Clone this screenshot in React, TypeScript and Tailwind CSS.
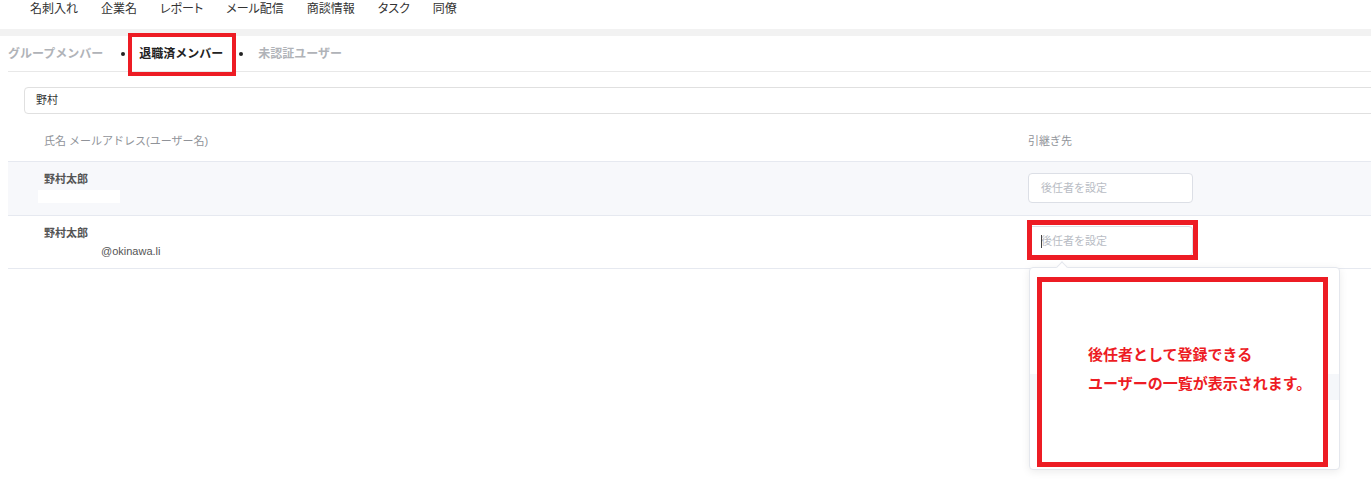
import React from 'react';

const navItems = ['名刺入れ', '企業名', 'レポート', 'メール配信', '商談情報', 'タスク', '同僚'];

// 候補行（注釈の枠に隠れている）
const popupRows = Array.from({ length: 8 }, (_, i) => i);

function SuccessorInput({ focused }: { focused?: boolean }) {
  return (
    <div className="relative w-[165px] h-[30px] rounded-[4px] border border-[#dcdfe6] bg-white flex items-center pl-[12px] text-[11px] text-[#b8bcc4]">
      {focused && <span className="absolute left-[12px] top-[8px] w-px h-[13px] bg-[#444]" />}
      <span>後任者を設定</span>
      {focused && (
        <>
          {/* 注釈の赤枠 */}
          <div className="absolute -left-[2px] -right-[6px] -top-[7px] -bottom-[5px] border-[5px] border-[#ed1c24] pointer-events-none" />
          {/* 候補一覧 */}
          <div className="absolute left-0 top-[40px] w-[311px] h-[203px] rounded-[4px] border border-[#e4e7ed] bg-white shadow-[0_2px_8px_rgba(0,0,0,0.08)] z-10">
            <div className="absolute left-[28px] -top-[5px] w-[8px] h-[8px] rotate-45 bg-white border-l border-t border-[#e4e7ed]" />
            <div className="h-full overflow-hidden pt-[2px] flex flex-col">
              {popupRows.map((row) => (
                <div key={row} className={`h-[26px] shrink-0 ${row === 4 ? 'bg-[#f5f7fa]' : ''}`} />
              ))}
            </div>
            <div className="absolute left-[7px] top-[9px] w-[291px] h-[190px] border-[5px] border-[#ed1c24] bg-white flex flex-col justify-center pl-[46px] pb-[6px] text-[15px] leading-[29px] font-bold text-[#ed1c24]">
              <p>後任者として登録できる</p>
              <p>ユーザーの一覧が表示されます。</p>
            </div>
          </div>
        </>
      )}
    </div>
  );
}

export default function App() {
  return (
    <div className="w-[1371px] h-[493px] overflow-hidden bg-white font-['Liberation_Sans','Noto_Sans_CJK_JP',sans-serif]">
      {/* ヘッダーナビ */}
      <nav className="h-[29px] flex items-start pt-[1px] pl-[30px] gap-[23px] text-[12px] leading-[16px] text-[#333] [font-feature-settings:'palt']">
        {navItems.map((item) => (
          <span key={item}>{item}</span>
        ))}
      </nav>
      <div className="h-[7px] bg-[#f2f2f2]" />

      {/* タブ */}
      <div className="ml-[8px] h-[36px] border-b border-[#e8e8e8] flex items-center gap-[16px] pt-[1px] text-[12px] font-bold">
        <span className="text-[#b0b3b8]">グループメンバー</span>
        <span className="w-[4px] h-[4px] rounded-full bg-[#222] ml-[2px]" />
        <span className="relative text-[#222] leading-[18px] -ml-[2px]">
          退職済メンバー
          <span className="absolute -left-[11px] -right-[13px] -top-[12px] -bottom-[13px] border-[4px] border-[#ed1c24]" />
        </span>
        <span className="w-[4px] h-[4px] rounded-full bg-[#222]" />
        <span className="text-[#b0b3b8] -ml-[1px]">未認証ユーザー</span>
      </div>

      {/* 検索 */}
      <div className="mt-[15px] ml-[24px] w-[1360px] h-[27px] rounded-[4px] border border-[#e0e0e0] flex items-center pl-[11px] text-[11px] text-[#333]">
        野村
      </div>

      {/* テーブル */}
      <div className="ml-[8px]">
        <div className="flex pt-[20px] pb-[12px] text-[11px] leading-[15px] text-[#909399]">
          <div className="w-[1020px] pl-[36px]">氏名 メールアドレス(ユーザー名)</div>
          <div>引継ぎ先</div>
        </div>

        <div className="flex h-[54px] border-t border-[#e6e9f0] bg-[#f7f8fb]">
          <div className="w-[1020px] pl-[36px] pt-[10px]">
            <div className="text-[11px] leading-[14px] font-bold text-[#555]">野村太郎</div>
            <div className="mt-[4px] -ml-[6px] w-[82px] h-[13px] bg-white" />
          </div>
          <div className="pt-[11px]">
            <SuccessorInput />
          </div>
        </div>

        <div className="flex h-[54px] border-t border-b border-[#e6e9f0] bg-white">
          <div className="w-[1020px] pl-[36px] pt-[10px]">
            <div className="text-[11px] leading-[14px] font-bold text-[#555]">野村太郎</div>
            <div className="mt-[4px] ml-[57px] text-[11px] leading-[14px] text-[#555]">@okinawa.li</div>
          </div>
          <div className="pt-[10px]">
            <SuccessorInput focused />
          </div>
        </div>
      </div>
    </div>
  );
}
